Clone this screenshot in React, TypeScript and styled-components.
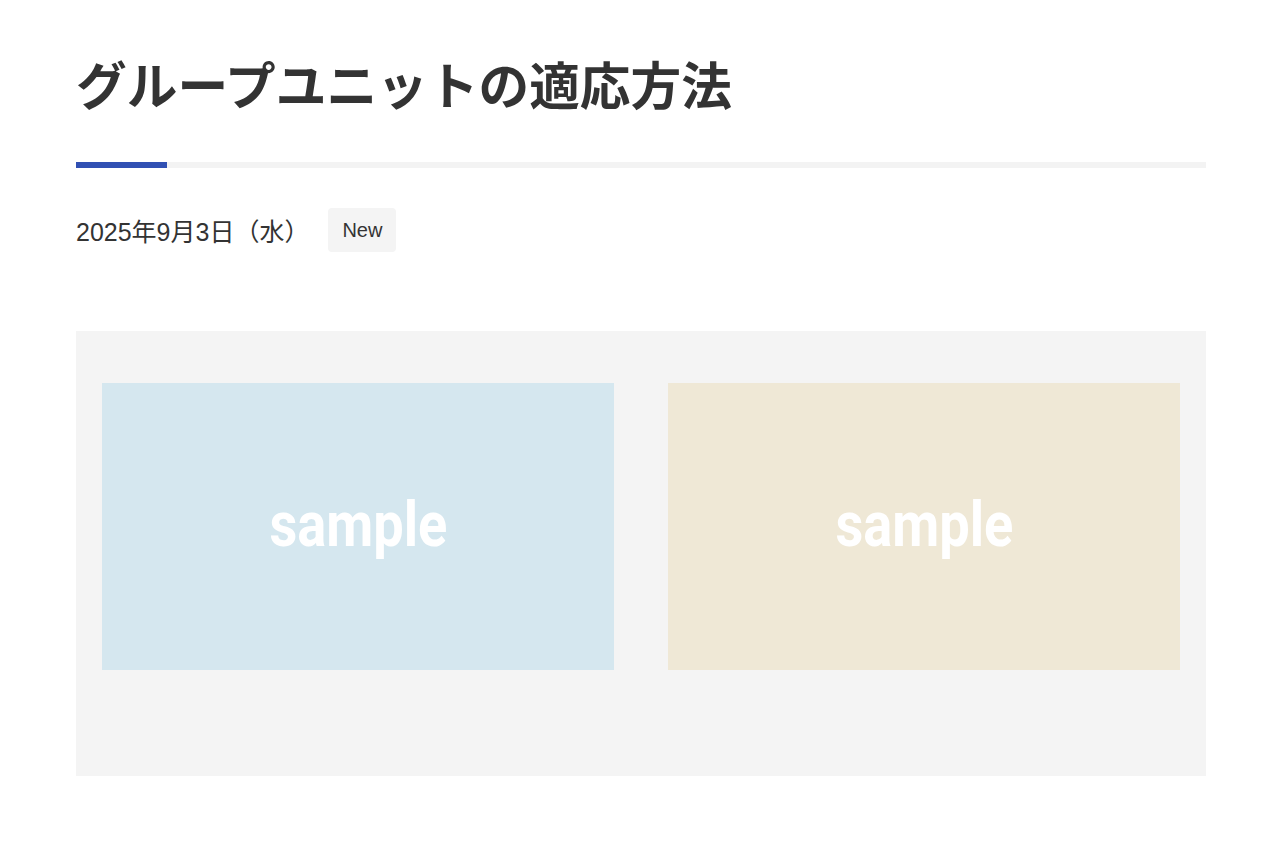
import styled, { createGlobalStyle } from "styled-components";

const GlobalStyle = createGlobalStyle`
  * {
    box-sizing: border-box;
  }

  html, body {
    margin: 0;
    padding: 0;
    background: #ffffff;
    color: #333333;
    font-family: "Noto Sans", "Noto Sans CJK JP", sans-serif;
  }
`;

interface Sample {
  id: number;
  color: string;
}

const SAMPLES: Sample[] = [
  { id: 1, color: "#d5e7ef" },
  { id: 2, color: "#efe8d6" },
];

const App = () => {
  return (
    <>
      <GlobalStyle />
      <Page>
        {/* Title */}
        <Title>グループユニットの適応方法</Title>
        <TitleRule>
          <TitleAccent />
        </TitleRule>

        {/* Meta */}
        <Meta>
          <DateText>2025年9月3日（水）</DateText>
          <Badge>New</Badge>
        </Meta>

        {/* Group unit */}
        <GroupUnit>
          {SAMPLES.map((s) => (
            <SampleImage key={s.id} $color={s.color}>
              <SampleLabel>sample</SampleLabel>
            </SampleImage>
          ))}
        </GroupUnit>
      </Page>
    </>
  );
};

export default App;

const Page = styled.main`
  width: 1130px;
  margin: 0 74px 0 76px;
  padding-top: 49px;
  padding-bottom: 68px;
`;

const Title = styled.h1`
  margin: 0;
  font-family: "Noto Sans CJK JP", sans-serif;
  font-weight: 700;
  font-size: 50.7px;
  line-height: 68px;
  color: #333333;
`;

const TitleRule = styled.div`
  margin-top: 45px;
  height: 6px;
  background: #f3f3f3;
`;

const TitleAccent = styled.div`
  width: 91px;
  height: 100%;
  background: #3150b3;
`;

const Meta = styled.div`
  display: flex;
  align-items: center;
  gap: 19px;
  margin-top: 40px;
`;

const DateText = styled.span`
  font-family: "Liberation Sans", "Noto Sans CJK JP", sans-serif;
  font-size: 25px;
  color: #333333;
`;

const Badge = styled.span`
  display: inline-flex;
  align-items: center;
  justify-content: center;
  width: 68px;
  height: 44px;
  border-radius: 4px;
  background: #f4f4f4;
  font-family: "Liberation Sans", sans-serif;
  font-size: 20px;
  color: #333333;
`;

const GroupUnit = styled.section`
  margin-top: 79px;
  background: #f4f4f4;
  padding: 52px 26px 106px;
  display: grid;
  grid-template-columns: 512px 512px;
  justify-content: space-between;
`;

const SampleImage = styled.div<{ $color: string }>`
  height: 287px;
  background: ${(p) => p.$color};
  display: flex;
  align-items: center;
  justify-content: center;
`;

const SampleLabel = styled.span`
  display: inline-block;
  font-family: Roboto, sans-serif;
  font-weight: 700;
  font-size: 63px;
  color: #ffffff;
  transform: scaleX(0.86);
  margin-top: -4px;
`;
